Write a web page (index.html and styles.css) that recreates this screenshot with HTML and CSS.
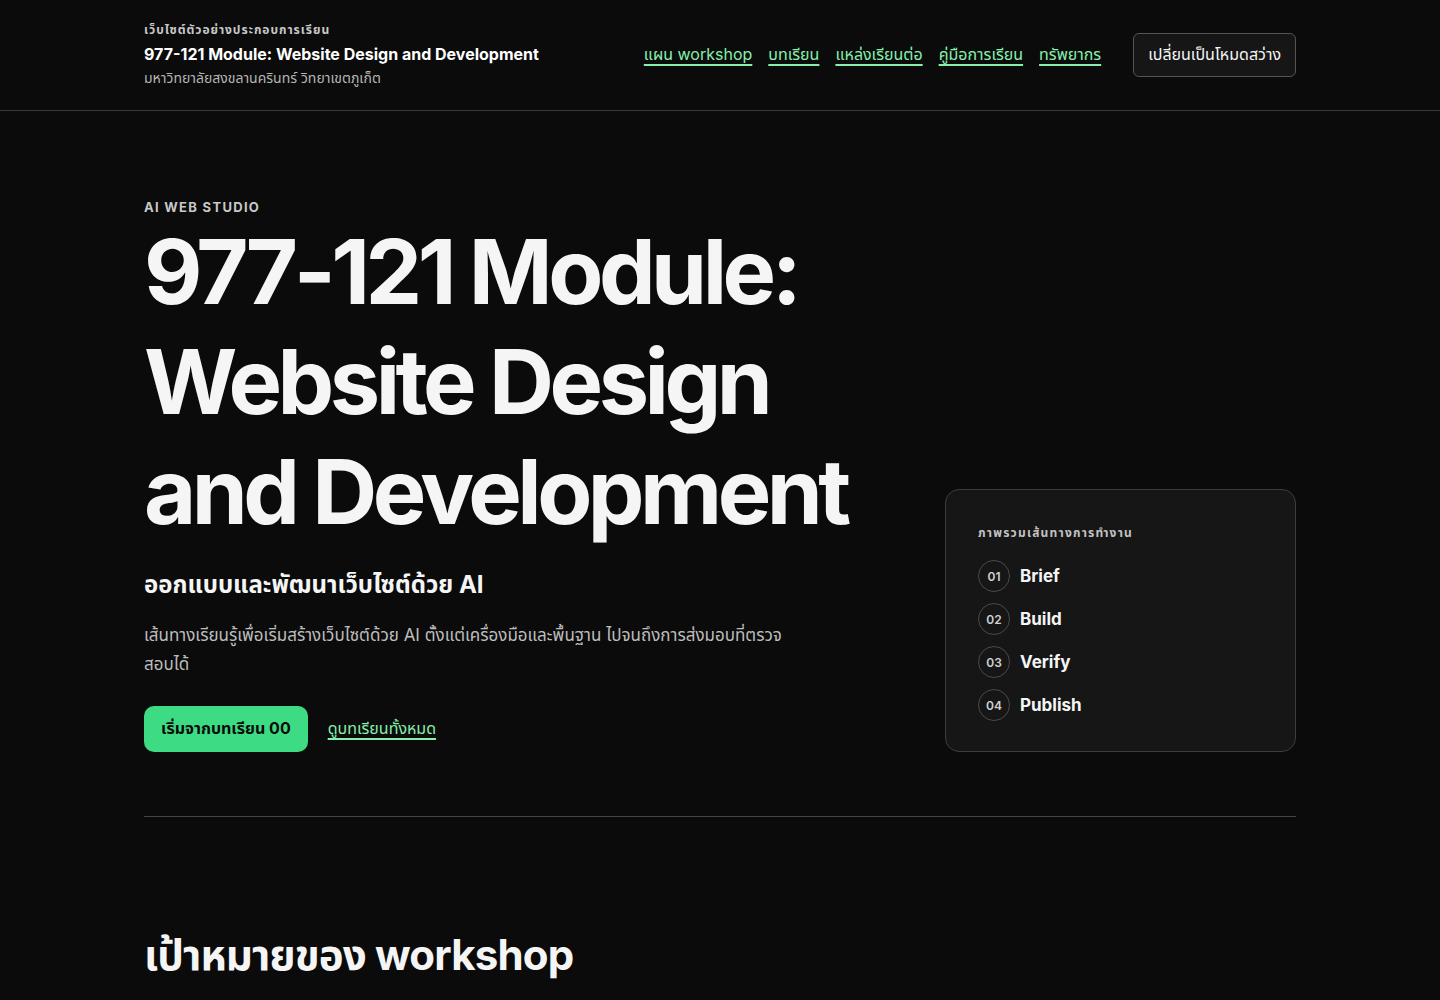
FILE: index.html
```html
<!DOCTYPE html>
<html lang="th">
<head>
    <meta charset="UTF-8">
    <meta name="viewport" content="width=device-width, initial-scale=1.0">
    <title>977-121 Module: Website Design and Development</title>
    <link rel="stylesheet" href="styles.css">
</head>
<body>
    <header class="site-header">
        <div class="container header-row">
            <div class="brand">
                <div class="brand-kicker">เว็บไซต์ตัวอย่างประกอบการเรียน</div>
                <div class="brand-title">977-121 Module: Website Design and Development</div>
                <div class="brand-sub">มหาวิทยาลัยสงขลานครินทร์ วิทยาเขตภูเก็ต</div>
            </div>
            <nav class="nav">
                <a href="#">แผน workshop</a>
                <a href="#">บทเรียน</a>
                <a href="#">แหล่งเรียนต่อ</a>
                <a href="#">คู่มือการเรียน</a>
                <a href="#">ทรัพยากร</a>
            </nav>
            <button class="theme-btn">เปลี่ยนเป็นโหมดสว่าง</button>
        </div>
    </header>

    <main class="container">
        <section class="hero">
            <div class="hero-main">
                <div class="eyebrow">AI WEB STUDIO</div>
                <h1>977-121 Module: Website Design and Development</h1>
                <h2 class="hero-sub">ออกแบบและพัฒนาเว็บไซต์ด้วย AI</h2>
                <p class="hero-text">เส้นทางเรียนรู้เพื่อเริ่มสร้างเว็บไซต์ด้วย AI ตั้งแต่เครื่องมือและพื้นฐาน ไปจนถึงการส่งมอบที่ตรวจสอบได้</p>
                <div class="hero-actions">
                    <a href="#" class="btn-primary">เริ่มจากบทเรียน 00</a>
                    <a href="#" class="link">ดูบทเรียนทั้งหมด</a>
                </div>
            </div>
            <aside class="flow-card">
                <div class="flow-title">ภาพรวมเส้นทางการทำงาน</div>
                <ol class="flow-list">
                    <li><span class="num">01</span> Brief</li>
                    <li><span class="num">02</span> Build</li>
                    <li><span class="num">03</span> Verify</li>
                    <li><span class="num">04</span> Publish</li>
                </ol>
            </aside>
        </section>

        <section class="goals">
            <h2>เป้าหมายของ workshop</h2>
        </section>
    </main>
</body>
</html>
```

FILE: styles.css
```css
body {
    margin: 0;
    background: #0b0b0b;
    color: #f5f5f5;
    font-family: Inter, "Noto Sans Thai", "Noto Sans", sans-serif;
}
.container {
    max-width: 1152px;
    margin: 0 auto;
}
.site-header {
    border-bottom: 1px solid #3a3a3a;
}
.header-row {
    display: flex;
    align-items: center;
    height: 110px;
}
.brand {
    flex: 1;
}
.brand-kicker {
    font-size: 12px;
    font-weight: 700;
    letter-spacing: 0.08em;
    color: #c8c8c8;
    margin-bottom: 5px;
}
.brand-title {
    font-size: 16px;
    font-weight: 700;
    color: #fff;
    margin-bottom: 4px;
}
.brand-sub {
    font-size: 14px;
    color: #b5b5b5;
}
.nav {
    display: flex;
    gap: 16px;
    margin-right: 32px;
}
.nav a, .link {
    color: #86efac;
    font-size: 16px;
    text-decoration: underline;
    text-underline-offset: 4px;
    text-decoration-thickness: 2px;
}
.theme-btn {
    background: #161616;
    border: 1px solid #555;
    border-radius: 6px;
    color: #f5f5f5;
    font-family: inherit;
    font-size: 16px;
    padding: 0 14px;
    height: 44px;
}
.hero {
    display: grid;
    grid-template-columns: 1fr 351px;
    gap: 40px;
    align-items: end;
    padding: 88px 0 64px;
    border-bottom: 1px solid #444;
}
.eyebrow {
    font-size: 13px;
    font-weight: 700;
    letter-spacing: 0.1em;
    color: #c8c8c8;
}
h1 {
    font-size: 90px;
    line-height: 110px;
    letter-spacing: -0.05em;
    font-weight: 700;
    margin: 2px 0 21px;
    max-width: 740px;
}
.hero-sub {
    font-size: 24px;
    font-weight: 700;
    margin: 0 0 17px;
}
.hero-text {
    font-size: 17px;
    line-height: 29px;
    color: #bdbdbd;
    max-width: 660px;
    margin: 0 0 27px;
}
.hero-actions {
    display: flex;
    align-items: center;
    gap: 20px;
}
.btn-primary {
    background: #3ddc84;
    color: #0b0b0b;
    font-weight: 700;
    font-size: 16px;
    text-decoration: none;
    border-radius: 10px;
    height: 46px;
    padding: 0 17px;
    display: flex;
    align-items: center;
}
.flow-card {
    background: #161616;
    border: 1px solid #3d3d3d;
    border-radius: 14px;
    padding: 34px 32px 30px;
}
.flow-title {
    font-size: 12px;
    font-weight: 700;
    letter-spacing: 0.1em;
    color: #c2c2c2;
    margin-bottom: 18px;
}
.flow-list {
    list-style: none;
    padding: 0;
    margin: 0;
    display: flex;
    flex-direction: column;
    gap: 11px;
}
.flow-list li {
    display: flex;
    align-items: center;
    gap: 10px;
    font-size: 17px;
    font-weight: 700;
}
.num {
    width: 30px;
    height: 30px;
    border: 1px solid #4a4a4a;
    border-radius: 50%;
    display: flex;
    align-items: center;
    justify-content: center;
    font-size: 12px;
    font-weight: 600;
    color: #d0d0d0;
}
.goals {
    padding-top: 108px;
}
.goals h2 {
    font-size: 42px;
    font-weight: 700;
    letter-spacing: -0.02em;
    margin: 0;
}
```
